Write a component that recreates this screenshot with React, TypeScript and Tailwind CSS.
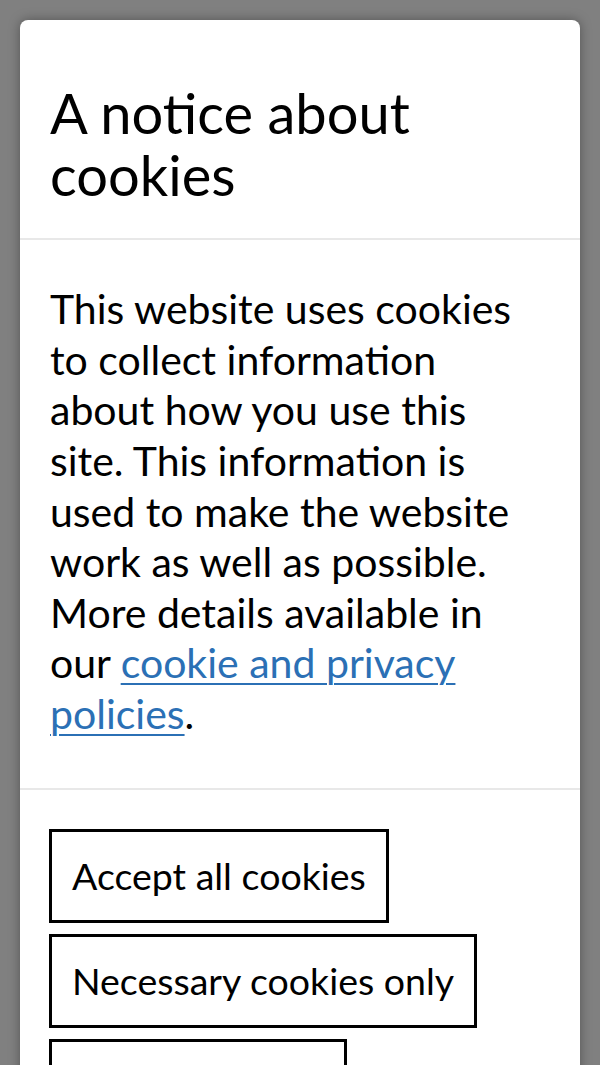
export default function App() {
  return (
    <div className="min-h-[1065px] bg-[#808080] px-5 pt-5 font-['Lato',sans-serif] text-black">
      <div className="overflow-hidden rounded-t-lg bg-white shadow-[0_0_12px_rgba(0,0,0,0.35)]">
        <div className="border-b-2 border-[#e8e8e8] px-[30px] pt-[62px] pb-[33px]">
          <h1 className="text-[56px] leading-[61.6px] font-normal">A notice about cookies</h1>
        </div>
        <div className="border-b-2 border-[#e8e8e8] pl-[30px] pr-[50px] pt-[44px] pb-[48px]">
          <p className="text-[41px] leading-[50.6px]">
            This website uses cookies to collect information about how you use this site. This information is used to make
            the website work as well as possible. More details available in our{' '}
            <a href="#" className="text-[#2b70b5] underline underline-offset-[5px] decoration-2">
              cookie and privacy policies
            </a>
            .
          </p>
        </div>
        <div className="flex flex-col items-start gap-[11px] px-[29px] pt-[39px] pb-10">
          {['Accept all cookies', 'Necessary cookies only', 'Cookie settings'].map((label) => (
            <button
              key={label}
              className="border-[3px] border-black bg-white px-[20px] py-[17px] text-[37.5px] leading-[54px]"
            >
              {label}
            </button>
          ))}
        </div>
      </div>
    </div>
  );
}
